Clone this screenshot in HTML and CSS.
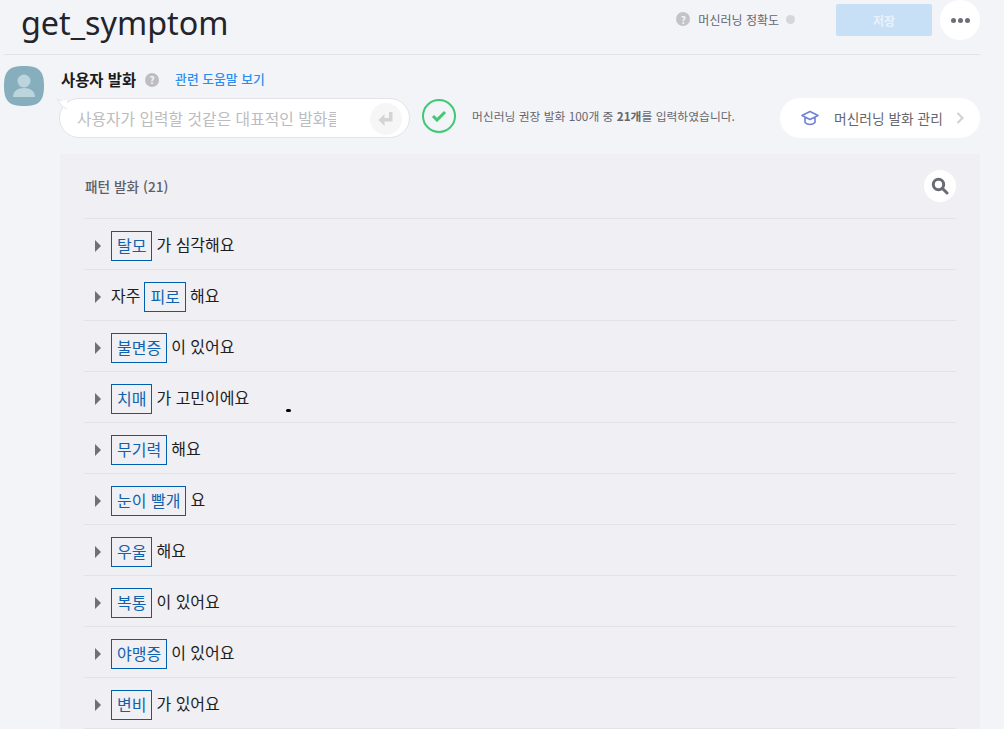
FILE: index.html
```html
<!DOCTYPE html>
<html lang="ko">
<head>
<meta charset="utf-8">
<title>get_symptom</title>
<link rel="stylesheet" href="styles.css">
</head>
<body>
<div class="page">
  <header class="top">
    <h1 class="title">get_symptom</h1>
    <div class="top-right">
      <span class="q q-dark">?</span>
      <span class="acc-label">머신러닝 정확도</span>
      <span class="acc-dot"></span>
      <button class="save">저장</button>
      <button class="more"><i></i><i></i><i></i></button>
    </div>
  </header>
  <main class="main">
    <div class="avatar">
      <svg width="40" height="40" viewBox="0 0 40 40"><path d="M20 0C35 0 40 5 40 20S35 40 20 40 0 35 0 20 5 0 20 0Z" fill="#86aebd"/><circle cx="20" cy="15" r="6.5" fill="#bcd5dc"/><path d="M9 31c0-6 5-9 11-9s11 3 11 9Z" fill="#bcd5dc"/></svg>
    </div>
    <div class="content">
      <div class="heading">
        <span class="h-title">사용자 발화</span>
        <span class="q q-light">?</span>
        <a class="help">관련 도움말 보기</a>
      </div>
      <div class="input-row">
        <div class="bubble">
          <svg class="tail" width="10" height="12" viewBox="0 0 10 12"><path d="M0.5 1C3 2.500 5 3 10 2V11C5 9.500 2 5 0.5 1Z" fill="#fff"/><path d="M10 11C5 9.500 2 5 0.5 1 2 2 3 2.500 5 2.600" fill="none" stroke="#e3e4e9"/></svg>
          <span class="ph">사용자가 입력할 것같은 대표적인 발화를 입력해주세요</span>
          <span class="enter">
            <svg width="16" height="16" viewBox="0 0 16 16"><path d="M11 1h3.500v9.500H6.500V15L0.500 9l6-6v4H11Z" fill="#d4d4d6"/></svg>
          </span>
        </div>
        <span class="check">
          <svg width="16" height="12" viewBox="0 0 16 12"><path d="M2 6l4 4 8-8" fill="none" stroke="#41c874" stroke-width="3"/></svg>
        </span>
        <p class="rec">머신러닝 권장 발화 100개 중 <b>21개</b>를 입력하였습니다.</p>
        <button class="manage">
          <svg width="18" height="16" viewBox="0 0 18 16"><path d="M9 1.500 1 5.500l8 4 8-4Z M4 7.500v5c1.500 1.500 3 2 5 2s3.500-.5 5-2v-5" fill="none" stroke="#6f80dc" stroke-width="1.600" stroke-linejoin="round"/></svg>
          <span class="manage-label">머신러닝 발화 관리</span>
          <svg width="8" height="12" viewBox="0 0 8 12"><path d="M1.500 1 6.500 6 1.500 11" fill="none" stroke="#cfd0d4" stroke-width="2"/></svg>
        </button>
      </div>
      <section class="panel">
        <div class="panel-head">
          <span class="panel-title">패턴 발화 (21)</span>
          <button class="search">
            <svg width="18" height="18" viewBox="0 0 18 18"><circle cx="7.500" cy="7.500" r="5.200" fill="none" stroke="#6b6b76" stroke-width="3"/><path d="M11.500 11.500 16 16" stroke="#6b6b76" stroke-width="3" stroke-linecap="round"/></svg>
          </button>
        </div>
        <ul class="list">
          <li class="row"><span class="arrow"></span><span class="tag">탈모</span><span class="plain">가 심각해요</span></li>
          <li class="row"><span class="arrow"></span><span class="plain">자주</span><span class="tag">피로</span><span class="plain">해요</span></li>
          <li class="row"><span class="arrow"></span><span class="tag">불면증</span><span class="plain">이 있어요</span></li>
          <li class="row"><span class="arrow"></span><span class="tag">치매</span><span class="plain">가 고민이에요</span><span class="speck"></span></li>
          <li class="row"><span class="arrow"></span><span class="tag">무기력</span><span class="plain">해요</span></li>
          <li class="row"><span class="arrow"></span><span class="tag">눈이 빨개</span><span class="plain">요</span></li>
          <li class="row"><span class="arrow"></span><span class="tag">우울</span><span class="plain">해요</span></li>
          <li class="row"><span class="arrow"></span><span class="tag">복통</span><span class="plain">이 있어요</span></li>
          <li class="row"><span class="arrow"></span><span class="tag">야맹증</span><span class="plain">이 있어요</span></li>
          <li class="row"><span class="arrow"></span><span class="tag">변비</span><span class="plain">가 있어요</span></li>
        </ul>
      </section>
    </div>
  </main>
</div>
</body>
</html>
```
FILE: styles.css
```css
* { box-sizing: border-box; }
html, body { margin: 0; height: 100%; overflow: hidden; }
body {
  background: #f2f4f8;
  font-family: "Noto Sans CJK KR", "Noto Sans", sans-serif;
  color: #1d1d22;
}
button { font-family: inherit; border: 0; padding: 0; }
.page { width: 1004px; padding: 0 24px 0 4px; }
.top {
  height: 55px;
  border-bottom: 1px solid #e2e3e6;
  display: flex;
  justify-content: space-between;
  align-items: flex-start;
  padding-left: 17px;
}
.title {
  margin: 0;
  font-family: "Noto Sans", sans-serif;
  font-weight: 400;
  font-size: 32.3px;
  line-height: 45px;
  color: #24242a;
}
.top-right { display: flex; align-items: center; height: 40px; }
.q {
  border-radius: 50%;
  display: flex;
  align-items: center;
  justify-content: center;
  font-weight: 700;
  color: #f4f5f8;
}
.q-dark { width: 14px; height: 14px; background: #c3c3c8; font-size: 10px; margin-top: -2px; }
.acc-label { font-size: 12px; color: #66666e; margin-left: 8px; margin-top: -2px; }
.acc-dot { width: 9px; height: 9px; border-radius: 50%; background: #d6d6da; margin-left: 7px; margin-right: 41px; margin-top: -2px; }
.save {
  width: 96px; height: 32px;
  background: #c8e0f6;
  color: #e9f2fb;
  border-radius: 2px;
  font-size: 12px;
  font-weight: 700;
}
.more {
  width: 40px; height: 40px;
  margin-left: 8px;
  border-radius: 50%;
  background: #fff;
  display: flex;
  align-items: center;
  justify-content: center;
  gap: 2px;
}
.more i { width: 5px; height: 5px; border-radius: 50%; background: #6e6e78; }
.main { display: flex; padding-top: 11px; }
.avatar { width: 40px; height: 40px; flex: none; }
.avatar svg { display: block; }
.content { margin-left: 16px; flex: 1; min-width: 0; }
.heading { display: flex; align-items: center; height: 27px; padding-left: 1px; }
.h-title { font-size: 15.400px; font-weight: 700; color: #1b1b20; padding-bottom: 2px; }
.q-light { width: 14px; height: 14px; background: #bdbdc2; font-size: 10px; margin-left: 9px; }
.help { font-size: 12.800px; font-weight: 500; color: #2b8ef0; margin-left: 16px; padding-bottom: 2px; }
.input-row { display: flex; align-items: center; height: 40px; margin-top: 5px; margin-left: -1px; }
.bubble {
  position: relative;
  width: 351px; height: 40px;
  flex: none;
  background: #fff;
  border: 1px solid #e3e4e9;
  border-radius: 20px;
  display: flex;
  align-items: center;
  padding-left: 17px;
}
.tail { position: absolute; left: -3px; top: -1px; }
.ph {
  width: 259px;
  overflow: hidden;
  white-space: nowrap;
  font-size: 15.800px;
  color: #bcbcc0;
}
.enter {
  position: absolute;
  right: 7px; top: 4px;
  width: 32px; height: 32px;
  border-radius: 50%;
  background: #f6f6f7;
  display: flex;
  align-items: center;
  justify-content: center;
}
.check {
  width: 34px; height: 34px;
  margin: 0 0 4px 12px;
  border: 2px solid #41c874;
  border-radius: 50%;
  display: flex;
  align-items: center;
  justify-content: center;
  flex: none;
}
.rec { margin: 0 0 6px 16px; font-size: 11.800px; color: #66666e; white-space: nowrap; flex: 1; }
.rec b { font-weight: 700; }
.manage {
  width: 200px; height: 40px;
  background: #fff;
  border-radius: 20px;
  flex: none;
  display: flex;
  align-items: center;
  padding-left: 21px;
  color: #66666e;
}
.manage-label { font-size: 13.750px; margin-left: 15px; margin-right: 13px; }
.panel { margin-top: 16px; background: #efeff4; padding: 0 24px; }
.panel-head { height: 65px; padding-left: 1px; display: flex; align-items: center; justify-content: space-between; border-bottom: 1px solid #e3e3e6; }
.panel-title { font-size: 13.700px; font-weight: 500; color: #5e5e66; }
.search {
  width: 32px; height: 32px;
  border-radius: 50%;
  background: #fff;
  display: flex;
  align-items: center;
  justify-content: center;
}
.list { list-style: none; margin: 0; padding: 0; }
.row {
  position: relative;
  height: 51px;
  border-bottom: 1px solid #e3e3e6;
  display: flex;
  align-items: center;
  gap: 4px;
  font-size: 16px;
  color: #1d1d22;
  padding: 3px 0 0 11px;
}
.plain { padding-bottom: 3px; }
.arrow {
  width: 0; height: 0;
  border-left: 6px solid #6f6f75;
  border-top: 6px solid transparent;
  border-bottom: 6px solid transparent;
  margin-right: 6px;
}
.tag {
  height: 30px;
  padding: 0 5px 2px;
  border: 1px solid #005eb0;
  color: #0f62ad;
  display: flex;
  align-items: center;
}
.speck {
  position: absolute;
  left: 202px; top: 37px;
  width: 5px; height: 3px;
  border-radius: 2px;
  background: #000;
}
```
